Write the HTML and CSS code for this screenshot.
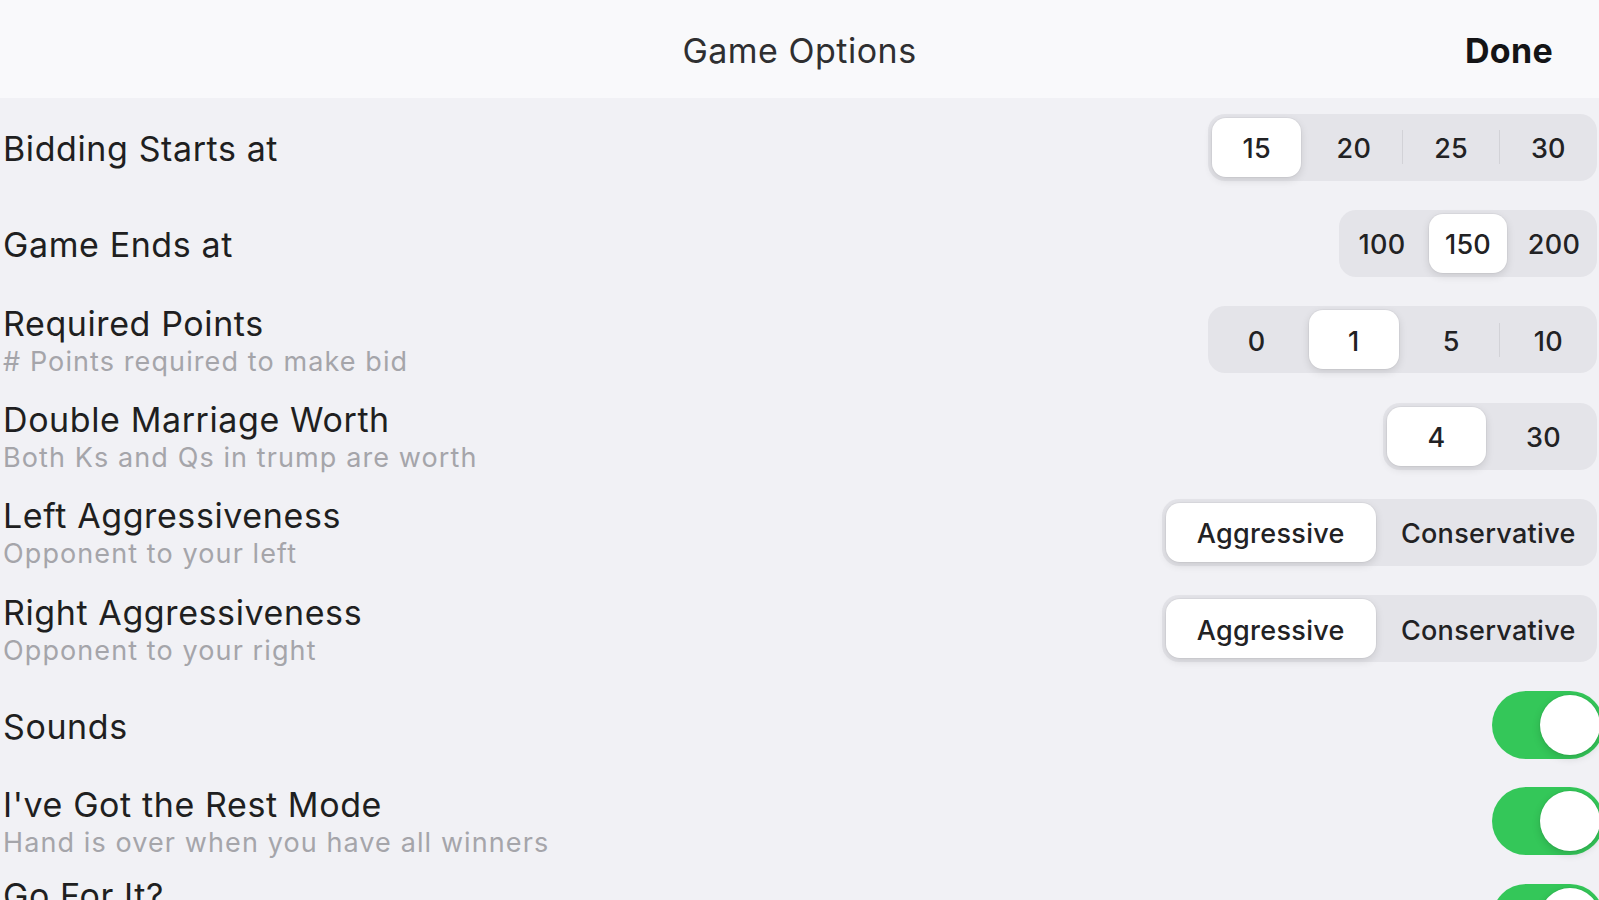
FILE: index.html
```html
<!DOCTYPE html>
<html>
<head>
<meta charset="utf-8">
<link rel="stylesheet" href="styles.css">
</head>
<body>
<header class="nav">
  <div class="nav-side"></div>
  <div class="nav-title">Game Options</div>
  <div class="nav-side nav-right"><span class="done">Done</span></div>
</header>
<main class="list">
  <div class="row">
    <div class="labels"><div class="title">Bidding Starts at</div></div>
    <div class="seg seg-4">
      <div class="opt sel"><span class="face">15</span></div>
      <div class="opt"><span class="face">20</span></div>
      <span class="sep"></span>
      <div class="opt"><span class="face">25</span></div>
      <span class="sep"></span>
      <div class="opt"><span class="face">30</span></div>
    </div>
  </div>
  <div class="row">
    <div class="labels"><div class="title">Game Ends at</div></div>
    <div class="seg seg-3">
      <div class="opt"><span class="face">100</span></div>
      <div class="opt sel"><span class="face">150</span></div>
      <div class="opt"><span class="face">200</span></div>
    </div>
  </div>
  <div class="row">
    <div class="labels">
      <div class="title">Required Points</div>
      <div class="sub"># Points required to make bid</div>
    </div>
    <div class="seg seg-4">
      <div class="opt"><span class="face">0</span></div>
      <div class="opt sel"><span class="face">1</span></div>
      <div class="opt"><span class="face">5</span></div>
      <span class="sep"></span>
      <div class="opt"><span class="face">10</span></div>
    </div>
  </div>
  <div class="row">
    <div class="labels">
      <div class="title">Double Marriage Worth</div>
      <div class="sub">Both Ks and Qs in trump are worth</div>
    </div>
    <div class="seg seg-2">
      <div class="opt sel"><span class="face">4</span></div>
      <div class="opt"><span class="face">30</span></div>
    </div>
  </div>
  <div class="row">
    <div class="labels">
      <div class="title">Left Aggressiveness</div>
      <div class="sub">Opponent to your left</div>
    </div>
    <div class="seg seg-wide">
      <div class="opt sel"><span class="face">Aggressive</span></div>
      <div class="opt"><span class="face">Conservative</span></div>
    </div>
  </div>
  <div class="row">
    <div class="labels">
      <div class="title">Right Aggressiveness</div>
      <div class="sub">Opponent to your right</div>
    </div>
    <div class="seg seg-wide">
      <div class="opt sel"><span class="face">Aggressive</span></div>
      <div class="opt"><span class="face">Conservative</span></div>
    </div>
  </div>
  <div class="row">
    <div class="labels"><div class="title">Sounds</div></div>
    <div class="toggle on"><span class="knob"></span></div>
  </div>
  <div class="row">
    <div class="labels">
      <div class="title">I've Got the Rest Mode</div>
      <div class="sub">Hand is over when you have all winners</div>
    </div>
    <div class="toggle on"><span class="knob"></span></div>
  </div>
  <div class="row row-last">
    <div class="labels">
      <div class="title">Go For It?</div>
    </div>
    <div class="toggle on"><span class="knob"></span></div>
  </div>
</main>
</body>
</html>
```

FILE: styles.css
```css
html, body {
  margin: 0;
  padding: 0;
  height: 100%;
  overflow: hidden;
}
body {
  background: #f1f1f5;
  font-family: Inter, "Liberation Sans", sans-serif;
  color: #1c1c1e;
}
.nav {
  height: 98px;
  background: #f9f9fb;
  display: grid;
  grid-template-columns: 1fr auto 1fr;
  align-items: center;
}
.nav-title {
  font-size: 34px;
  color: #2f2f31;
  font-weight: 400;
  letter-spacing: 0.5px;
  padding-top: 2px;
}
.nav-right {
  display: flex;
  justify-content: flex-end;
  padding-right: 46px;
}
.done {
  font-size: 34px;
  font-weight: 700;
  color: #141416;
  letter-spacing: 0.3px;
  padding-top: 2px;
}
.list {
  display: flex;
  flex-direction: column;
  padding-top: 1px;
}
.row {
  height: 96.3px;
  flex: none;
  display: flex;
  align-items: center;
  justify-content: space-between;
  padding-left: 3px;
  padding-right: 2px;
}
.labels {
  display: flex;
  flex-direction: column;
  padding-top: 4px;
}
.title {
  font-size: 34px;
  line-height: 38px;
  letter-spacing: 0.6px;
  color: #1f1f21;
}
.sub {
  font-size: 27px;
  line-height: 34px;
  letter-spacing: 1.1px;
  color: #a5a5aa;
  margin-top: 2px;
}
.row-last .labels {
  padding-top: 0;
  align-self: flex-start;
  margin-top: 8px;
}
.seg {
  display: flex;
  align-items: center;
  background: #e4e4e9;
  border-radius: 17px;
  height: 67px;
}
.opt {
  height: 100%;
  padding: 4px;
  box-sizing: border-box;
  display: flex;
}
.face {
  flex: 1;
  display: flex;
  align-items: center;
  justify-content: center;
  padding-top: 3px;
  font-size: 27px;
  font-weight: 500;
  letter-spacing: 0.3px;
  color: #222224;
  border-radius: 14px;
}
.seg-4 .opt { width: 97.25px; }
.seg-3 .opt { width: 86px; }
.seg-2 .opt { width: 107px; }
.seg-wide .opt { width: 217.5px; }
.opt.sel .face {
  background: #ffffff;
  box-shadow: 0 3px 8px rgba(0,0,0,0.12), 0 0 0 1px rgba(0,0,0,0.03);
}
.sep {
  width: 1px;
  height: 34px;
  background: #d2d2d7;
  margin: 0 -1px 0 0;
  position: relative;
  left: -0.5px;
}
.toggle {
  width: 112px;
  height: 68px;
  border-radius: 34px;
  background: #34c759;
  margin-right: -7px;
  display: flex;
  align-items: center;
  justify-content: flex-end;
  padding: 0 4px;
  box-sizing: border-box;
}
.knob {
  width: 60px;
  height: 60px;
  border-radius: 50%;
  background: #fff;
  box-shadow: 0 3px 8px rgba(0,0,0,0.15), 0 0 0 1px rgba(0,0,0,0.04);
}
```
